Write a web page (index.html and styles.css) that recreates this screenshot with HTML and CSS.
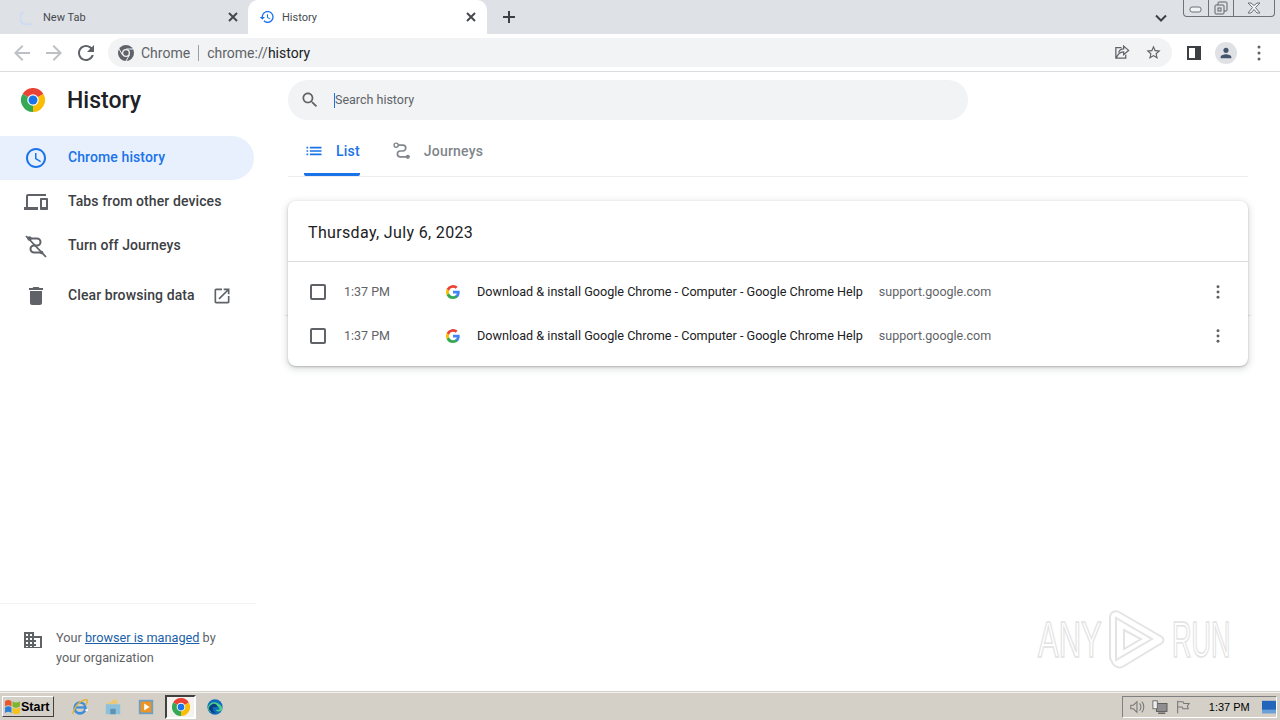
FILE: index.html
```html
<!DOCTYPE html>
<html lang="en">
<head>
    <meta charset="UTF-8">
    <title>History</title>
    <link rel="stylesheet" href="styles.css">
</head>
<body>
    <div class="tabstrip">
        <div class="tab">
            <svg class="tab-icon" viewBox="0 0 16 16"><path d="M3 3A7 7 0 0 0 11 14.500" fill="none" stroke="#cbdaf5" stroke-width="1.800"/></svg>
            <span class="tab-title">New Tab</span>
            <svg class="tab-close" viewBox="0 0 12 12"><path d="M2 2l8 8M10 2l-8 8"/></svg>
        </div>
        <div class="tab tab-active">
            <svg class="tab-icon" viewBox="0 0 24 24"><path fill="#1a73e8" d="M13 3c-4.970 0-9 4.030-9 9H1l3.890 3.890.07.14L9 12H6c0-3.870 3.130-7 7-7s7 3.130 7 7-3.130 7-7 7c-1.930 0-3.680-.79-4.940-2.060l-1.420 1.420C8.270 19.990 10.510 21 13 21c4.970 0 9-4.030 9-9s-4.030-9-9-9zm-1 5v5l4.280 2.540.72-1.210-3.500-2.080V8H12z"/></svg>
            <span class="tab-title">History</span>
            <svg class="tab-close" viewBox="0 0 12 12"><path d="M2 2l8 8M10 2l-8 8"/></svg>
        </div>
        <svg class="new-tab" viewBox="0 0 14 14"><path d="M7 1v12M1 7h12"/></svg>
        <div class="strip-space"></div>
        <svg class="tab-search" viewBox="0 0 12 8"><path d="M1 1.500l5 5 5-5"/></svg>
        <div class="window-btns">
            <div class="window-btn btn-min"><svg viewBox="0 0 14 8"><rect x="1" y="1" width="11" height="5" rx="2"/></svg></div>
            <div class="window-btn btn-max"><svg viewBox="0 0 14 14"><rect x="4" y="1" width="9" height="9" rx="1"/><rect x="1" y="4" width="9" height="9" rx="1" fill="#dee1e6"/><rect x="4" y="7" width="3" height="3"/></svg></div>
            <div class="window-btn btn-close"><svg viewBox="0 0 16 12"><path d="M2 1l4.500 4.500L2 11h3l3-3.500 3 3.500h3L9.500 5.500 14 1h-3L8 3.500 5 1z"/></svg></div>
        </div>
    </div>

    <div class="toolbar">
        <svg class="tool-icon dim" viewBox="0 0 24 24"><path d="M20 11H7.830l5.590-5.590L12 4l-8 8 8 8 1.410-1.410L7.830 13H20v-2z"/></svg>
        <svg class="tool-icon dim" viewBox="0 0 24 24"><path d="M4 11h12.170l-5.590-5.590L12 4l8 8-8 8-1.410-1.410L16.170 13H4v-2z"/></svg>
        <svg class="tool-icon" viewBox="0 0 24 24"><path d="M17.650 6.350C16.200 4.900 14.210 4 12 4c-4.420 0-7.990 3.580-7.990 8s3.570 8 7.990 8c3.730 0 6.840-2.550 7.730-6h-2.080c-.82 2.330-3.040 4-5.650 4-3.310 0-6-2.690-6-6s2.690-6 6-6c1.660 0 3.140.69 4.220 1.780L13 11h7V4l-2.350 2.350z"/></svg>
        <div class="omnibox">
            <svg class="site-icon" viewBox="0 0 48 48">
                <circle cx="24" cy="24" r="24" fill="#5f6368"/>
                <path d="M24 12h20.800M13.600 30L3.200 12M34.400 30L24 48" stroke="#f1f3f4" stroke-width="3"/>
                <circle cx="24" cy="24" r="12" fill="#f1f3f4"/>
                <circle cx="24" cy="24" r="8" fill="#5f6368"/>
            </svg>
            <span class="site-name">Chrome</span>
            <span class="site-sep"></span>
            <span class="url">chrome://<b>history</b></span>
            <span class="omni-space"></span>
            <svg class="omni-icon" viewBox="0 0 24 24"><path fill="none" stroke="#5f6368" stroke-width="1.800" d="M12 5H4v15h14v-5M4 20l4-6c2-2 4-3 7-3v4l7-6-7-6v4c-4 0-6 2-7 5"/></svg>
            <svg class="omni-icon star" viewBox="0 0 24 24"><path fill="#5f6368" d="M22 9.240l-7.190-.62L12 2 9.190 8.630 2 9.240l5.460 4.730L5.820 21 12 17.270 18.180 21l-1.630-7.030L22 9.240zM12 15.400l-3.760 2.270 1-4.280-3.320-2.880 4.380-.38L12 6.100l1.710 4.040 4.380.38-3.320 2.880 1 4.280L12 15.400z"/></svg>
        </div>
        <svg class="panel-icon" viewBox="0 0 14 14"><path fill="#3c4043" fill-rule="evenodd" d="M0 0h14v14H0zM2 2v10h6V2z"/></svg>
        <div class="avatar">
            <svg viewBox="0 0 24 24"><path fill="#44546f" d="M12 12c2.210 0 4-1.790 4-4s-1.790-4-4-4-4 1.790-4 4 1.790 4 4 4zm0 2c-2.670 0-8 1.340-8 4v2h16v-2c0-2.660-5.330-4-8-4z"/></svg>
        </div>
        <svg class="menu-icon" viewBox="0 0 4 16"><circle cx="2" cy="2" r="1.500"/><circle cx="2" cy="8" r="1.500"/><circle cx="2" cy="14" r="1.500"/></svg>
    </div>

    <div class="page">
        <div class="sidebar">
            <div class="brand">
                <svg class="logo" viewBox="0 0 48 48">
                    <path fill="#ea4335" d="M24 24L3.200 12A24 24 0 0 1 44.800 12z"/>
                    <path fill="#fbbc04" d="M24 24L44.800 12A24 24 0 0 1 24 48z"/>
                    <path fill="#34a853" d="M24 24L24 48A24 24 0 0 1 3.200 12z"/>
                    <circle cx="24" cy="24" r="11.500" fill="#fff"/>
                    <circle cx="24" cy="24" r="9" fill="#1a73e8"/>
                </svg>
                <h1>History</h1>
            </div>
            <div class="nav">
                <div class="nav-item selected">
                    <svg class="nav-icon" viewBox="0 0 24 24"><path d="M11.990 2C6.470 2 2 6.480 2 12s4.470 10 9.990 10C17.520 22 22 17.520 22 12S17.520 2 11.990 2zM12 20c-4.420 0-8-3.580-8-8s3.580-8 8-8 8 3.580 8 8-3.580 8-8 8zm.5-13H11v6l5.250 3.150.75-1.230-4.500-2.670z"/></svg>
                    <span>Chrome history</span>
                </div>
                <div class="nav-item">
                    <svg class="nav-icon" viewBox="0 0 24 24"><path d="M4 6h18V4H4c-1.100 0-2 .9-2 2v11H0v3h14v-3H4V6zm19 2h-6c-.55 0-1 .45-1 1v10c0 .55.45 1 1 1h6c.55 0 1-.45 1-1V9c0-.55-.45-1-1-1zm-1 9h-4v-7h4v7z"/></svg>
                    <span>Tabs from other devices</span>
                </div>
                <div class="nav-item">
                    <svg class="nav-icon" viewBox="0 0 24 24"><path fill="none" stroke="#5f6368" stroke-width="2" d="M7 4.500h6a3.500 3.500 0 0 1 0 7h-3a3.500 3.500 0 0 0 0 7h6"/><path fill="none" stroke="#5f6368" stroke-width="1.800" d="M2 2l20 21"/><circle cx="5.500" cy="4.500" r="2.200"/><circle cx="17.500" cy="18.500" r="1.800"/></svg>
                    <span>Turn off Journeys</span>
                </div>
                <div class="nav-item nav-clear">
                    <svg class="nav-icon" viewBox="0 0 24 24"><path d="M6 19c0 1.100.9 2 2 2h8c1.100 0 2-.9 2-2V7H6v12zM19 4h-3.500l-1-1h-5l-1 1H5v2h14V4z"/></svg>
                    <span>Clear browsing data</span>
                    <svg class="open-icon" viewBox="0 0 24 24"><path d="M19 19H5V5h7V3H5c-1.110 0-2 .9-2 2v14c0 1.100.89 2 2 2h14c1.100 0 2-.9 2-2v-7h-2v7zM14 3v2h3.590l-9.830 9.830 1.410 1.410L19 6.410V10h2V3h-7z"/></svg>
                </div>
            </div>
            <div class="managed">
                <svg class="managed-icon" viewBox="0 0 20 18"><path fill-rule="evenodd" d="M1 1h10v4h8v12H1zM3 3v2h2V3zm4 0v2h2V3zM3 7v2h2V7zm4 0v2h2V7zM3 11v2h2v-2zm4 0v2h2v-2zM3 15v1h2v-1zm4 0v1h2v-1zm4-8v2h2v2h-2v2h2v2h-2v1h6V7z"/></svg>
                <p>Your <a href="#">browser is managed</a> by<br>your organization</p>
            </div>
        </div>

        <div class="main">
            <div class="search">
                <svg class="search-icon" viewBox="0 0 24 24"><path d="M15.500 14h-.79l-.28-.27C15.410 12.590 16 11.110 16 9.500 16 5.910 13.090 3 9.500 3S3 5.910 3 9.500 5.910 16 9.500 16c1.610 0 3.090-.59 4.230-1.570l.27.28v.79l5 4.990L20.490 19l-4.990-5zm-6 0C7.010 14 5 11.990 5 9.500S7.010 5 9.500 5 14 7.010 14 9.500 11.990 14 9.500 14z"/></svg>
                <span class="caret"></span>
                <span class="search-text">Search history</span>
            </div>
            <div class="tabs">
                <div class="view-tab view-active">
                    <svg viewBox="0 0 24 24"><path d="M3 13h2v-2H3v2zm0 4h2v-2H3v2zm0-8h2V7H3v2zm4 4h14v-2H7v2zm0 4h14v-2H7v2zM7 7v2h14V7H7z"/></svg>
                    <span>List</span>
                </div>
                <div class="view-tab">
                    <svg viewBox="0 0 24 24"><path fill="none" stroke="#80868b" stroke-width="2" d="M7 5h6a3.500 3.500 0 0 1 0 7h-3a3.500 3.500 0 0 0 0 7h7"/><circle cx="5" cy="5" r="2.500" fill="none" stroke="#80868b" stroke-width="1.600"/><circle cx="19" cy="19" r="2.500"/></svg>
                    <span>Journeys</span>
                </div>
            </div>
            <div class="card">
                <div class="card-date">Thursday, July 6, 2023</div>
                <div class="entries">
                    <div class="entry">
                        <span class="checkbox"></span>
                        <span class="entry-time">1:37 PM</span>
                        <svg class="favicon" viewBox="0 0 18 18">
                            <path fill="#4285f4" d="M17.640 9.200c0-.64-.06-1.250-.16-1.840H9v3.480h4.840a4.140 4.140 0 0 1-1.800 2.720v2.260h2.920c1.700-1.570 2.680-3.880 2.680-6.620z"/>
                            <path fill="#34a853" d="M9 18c2.430 0 4.470-.8 5.960-2.180l-2.920-2.260c-.8.54-1.840.86-3.040.86-2.340 0-4.320-1.580-5.040-3.700H.96v2.330A9 9 0 0 0 9 18z"/>
                            <path fill="#fbbc05" d="M3.960 10.720A5.410 5.410 0 0 1 3.680 9c0-.6.1-1.180.28-1.720V4.950H.96A9 9 0 0 0 0 9c0 1.450.35 2.830.96 4.050l3-2.330z"/>
                            <path fill="#ea4335" d="M9 3.580c1.320 0 2.500.45 3.440 1.350l2.580-2.580A9 9 0 0 0 .96 4.950l3 2.330C4.680 5.160 6.660 3.580 9 3.580z"/>
                        </svg>
                        <span class="entry-title">Download &amp; install Google Chrome - Computer - Google Chrome Help</span>
                        <span class="entry-domain">support.google.com</span>
                        <svg class="entry-menu" viewBox="0 0 4 16"><circle cx="2" cy="2" r="1.700"/><circle cx="2" cy="8" r="1.700"/><circle cx="2" cy="14" r="1.700"/></svg>
                    </div>
                    <div class="entry">
                        <span class="checkbox"></span>
                        <span class="entry-time">1:37 PM</span>
                        <svg class="favicon" viewBox="0 0 18 18">
                            <path fill="#4285f4" d="M17.640 9.200c0-.64-.06-1.250-.16-1.840H9v3.480h4.840a4.140 4.140 0 0 1-1.800 2.720v2.260h2.920c1.700-1.570 2.680-3.880 2.680-6.620z"/>
                            <path fill="#34a853" d="M9 18c2.430 0 4.470-.8 5.960-2.180l-2.920-2.260c-.8.54-1.840.86-3.040.86-2.340 0-4.320-1.580-5.040-3.700H.96v2.330A9 9 0 0 0 9 18z"/>
                            <path fill="#fbbc05" d="M3.960 10.720A5.410 5.410 0 0 1 3.680 9c0-.6.1-1.180.28-1.720V4.950H.96A9 9 0 0 0 0 9c0 1.450.35 2.830.96 4.050l3-2.330z"/>
                            <path fill="#ea4335" d="M9 3.580c1.320 0 2.500.45 3.440 1.350l2.580-2.580A9 9 0 0 0 .96 4.950l3 2.330C4.680 5.160 6.660 3.580 9 3.580z"/>
                        </svg>
                        <span class="entry-title">Download &amp; install Google Chrome - Computer - Google Chrome Help</span>
                        <span class="entry-domain">support.google.com</span>
                        <svg class="entry-menu" viewBox="0 0 4 16"><circle cx="2" cy="2" r="1.700"/><circle cx="2" cy="8" r="1.700"/><circle cx="2" cy="14" r="1.700"/></svg>
                    </div>
                </div>
            </div>
        </div>
    </div>

    <div class="watermark">
        <span class="wm-text">ANY</span>
        <svg class="wm-logo" viewBox="0 0 60 64">
            <path d="M4 9a6 6 0 0 1 9-5l43 25a4 4 0 0 1 0 6L18 58a8 8 0 0 1-11-2L4 50z"/>
            <path d="M10 10v42l36-21z"/>
            <path d="M18 22v19l17-10z"/>
        </svg>
        <span class="wm-text wm-run">RUN</span>
    </div>

    <div class="taskbar">
        <div class="start">
            <svg viewBox="0 0 16 16"><path fill="#e8562a" d="M1 3c2-1.500 4-1.500 6 0v5C5 6.500 3 6.500 1 8z"/><path fill="#7db52f" d="M8 3c2 1.500 4 1.500 7 0v5c-3 1.500-5 1.500-7 0z"/><path fill="#2b7fd6" d="M1 9c2-1.500 4-1.500 6 0v5c-2-1.500-4-1.500-6 0z"/><path fill="#f5c21a" d="M8 9c2 1.500 4 1.500 7 0v5c-3 1.500-5 1.500-7 0z"/></svg>
            <span>Start</span>
        </div>
        <div class="quick">
            <div class="quick-item">
                <svg viewBox="0 0 20 20"><circle cx="10" cy="11" r="6" fill="none" stroke="#3f8fd8" stroke-width="3"/><path d="M5 10.500h10" stroke="#3f8fd8" stroke-width="2.500"/><path d="M16 13.500h3" stroke="#fff" stroke-width="2"/><path d="M2 18C4 8 12 1 18 2c1 2-1 4-2 6" fill="none" stroke="#e2b33a" stroke-width="1.500"/></svg>
            </div>
            <div class="quick-item">
                <svg viewBox="0 0 20 20"><path fill="#e9c877" d="M3 5h5l1-3h6v5H3z"/><path fill="#8cc1dc" d="M2 7h16v11H2z"/><path fill="#5e93b3" d="M7 12h6v6H7z"/></svg>
            </div>
            <div class="quick-item">
                <svg viewBox="0 0 20 20"><rect x="2" y="2" width="16" height="16" fill="#6d9ec4"/><rect x="4" y="4" width="12" height="12" fill="#ee9424"/><path fill="#fff" d="M8 6l6 4-6 4z"/></svg>
            </div>
            <div class="quick-item quick-active">
                <svg viewBox="0 0 48 48">
                    <path fill="#ea4335" d="M24 24L3.200 12A24 24 0 0 1 44.800 12z"/>
                    <path fill="#fbbc04" d="M24 24L44.800 12A24 24 0 0 1 24 48z"/>
                    <path fill="#34a853" d="M24 24L24 48A24 24 0 0 1 3.200 12z"/>
                    <circle cx="24" cy="24" r="11.500" fill="#fff"/>
                    <circle cx="24" cy="24" r="9" fill="#1a73e8"/>
                </svg>
            </div>
            <div class="quick-item">
                <svg viewBox="0 0 20 20"><circle cx="10" cy="10" r="8.500" fill="#0f6cbd"/><path fill="#4fd08a" d="M2 11c1-5 5-7 9-6 4 1 7 4 7 7 0 2-2 3-4 3-1 0-3-1-3-2h4c0-3-3-5-6-4-3 1-4 4-3 7-2-1-4-3-4-5z"/><path fill="#0a3f82" d="M5 8c3-3 7-2 8 2H8c-1 2 0 5 3 7-4 0-7-2-8-5 0-1 1-3 2-4z"/></svg>
            </div>
        </div>
        <div class="task-space"></div>
        <div class="tray">
            <svg class="tray-icon" viewBox="0 0 18 16"><path fill="none" stroke="#777" stroke-width="1.200" d="M2 6h3l4-4v12l-4-4H2zM12 4c2 2 2 6 0 8M14.500 2c3 3 3 9 0 12"/></svg>
            <svg class="tray-icon" viewBox="0 0 18 16"><rect x="5" y="4" width="12" height="9" fill="#8f8f8f" stroke="#555"/><rect x="1" y="1" width="5" height="9" fill="#eee" stroke="#666"/><path d="M7 15h8" stroke="#555" stroke-width="1.500"/></svg>
            <svg class="tray-icon" viewBox="0 0 18 16"><path fill="none" stroke="#777" stroke-width="1.200" d="M3 1v14M3 2h6l1 2h6l-2 3 1 3H9L8 8H3"/></svg>
            <span class="clock">1:37 PM</span>
            <svg class="show-desktop" viewBox="0 0 16 14"><rect width="16" height="14" fill="#2266bb"/><rect y="10" width="16" height="4" fill="#6aa2d8"/></svg>
        </div>
    </div>
</body>
</html>
```

FILE: styles.css
```css
* {
    margin: 0;
    padding: 0;
    box-sizing: border-box;
}

body {
    font-family: Roboto, 'Liberation Sans', sans-serif;
    background: white;
    width: 1280px;
    height: 720px;
    overflow: hidden;
    display: flex;
    flex-direction: column;
    position: relative;
}

/* tab strip */

.tabstrip {
    height: 34px;
    background: #dee1e6;
    display: flex;
    align-items: center;
    flex: none;
}

.tab {
    width: 248px;
    height: 34px;
    display: flex;
    align-items: center;
    padding: 0 9px 0 20px;
}

.tab-active {
    width: 239px;
    background: white;
    border-radius: 10px 10px 0 0;
    padding-left: 11px;
    padding-right: 10px;
}

.tab-icon {
    width: 16px;
    height: 16px;
    flex: none;
}

.tab-title {
    font-size: 11px;
    color: #45494e;
    margin-left: 7px;
    flex: 1;
}

.tab-close {
    width: 12px;
    height: 12px;
    fill: none;
    stroke: #45494e;
    stroke-width: 2;
}

.new-tab {
    width: 14px;
    height: 14px;
    margin-left: 15px;
    fill: none;
    stroke: #3c4043;
    stroke-width: 2;
}

.strip-space {
    flex: 1;
}

.tab-search {
    width: 12px;
    height: 8px;
    fill: none;
    stroke: #3c4043;
    stroke-width: 2;
    margin-right: 16px;
    margin-top: 1px;
}

.window-btns {
    width: 92px;
    height: 17px;
    margin-right: 5px;
    align-self: flex-start;
    display: flex;
    border: 1px solid #6e7378;
    border-top: none;
    border-radius: 0 0 4px 4px;
}

.window-btn {
    display: flex;
    align-items: center;
    justify-content: center;
    border-right: 1px solid #6e7378;
}

.btn-min { width: 25px; }
.btn-max { width: 25px; }
.btn-close { flex: 1; border-right: none; }

.btn-min svg {
    width: 14px;
    height: 8px;
    margin-top: 4px;
    fill: #f1f3f4;
    stroke: #6e7378;
}

.btn-max svg {
    width: 14px;
    height: 14px;
    fill: none;
    stroke: #5f6368;
}

.btn-close svg {
    width: 16px;
    height: 12px;
    fill: #f1f3f4;
    stroke: #6e7378;
}

/* toolbar */

.toolbar {
    height: 38px;
    flex: none;
    background: white;
    border-bottom: 1px solid #dadce0;
    display: flex;
    align-items: center;
    padding: 0 0 0 10px;
}

.tool-icon {
    width: 24px;
    height: 24px;
    margin-right: 8px;
    fill: #5f6368;
}

.tool-icon.dim {
    fill: #bdc1c6;
}

.omnibox {
    width: 1064px;
    height: 29px;
    background: #f1f3f4;
    border-radius: 15px;
    display: flex;
    align-items: center;
    padding: 0 10px 0 10px;
    margin-left: 2px;
}

.site-icon {
    width: 16px;
    height: 16px;
    flex: none;
}

.site-name {
    font-size: 14px;
    color: #5f6368;
    margin-left: 7px;
}

.site-sep {
    width: 1px;
    height: 16px;
    background: #9aa0a6;
    margin: 0 8px;
}

.url {
    font-size: 14px;
    color: #5f6368;
}

.url b {
    font-weight: normal;
    color: #202124;
}

.omni-space {
    flex: 1;
}

.omni-icon {
    width: 17px;
    height: 17px;
}

.omni-icon.star {
    margin-left: 15px;
}

.panel-icon {
    width: 14px;
    height: 14px;
    margin-left: 15px;
}

.avatar {
    width: 22px;
    height: 22px;
    border-radius: 50%;
    background: #dfe1e5;
    margin-left: 14px;
    padding: 3px;
}

.avatar svg {
    display: block;
    width: 16px;
    height: 16px;
}

.menu-icon {
    width: 4px;
    height: 16px;
    margin-left: 20px;
    fill: #5f6368;
}

/* page */

.page {
    flex: 1;
    display: flex;
    min-height: 0;
}

.sidebar {
    width: 256px;
    flex: none;
    display: flex;
    flex-direction: column;
}

.brand {
    height: 56px;
    margin-bottom: 8px;
    display: flex;
    align-items: center;
    padding-left: 21px;
}

.logo {
    width: 24px;
    height: 24px;
}

.brand h1 {
    font-size: 23px;
    font-weight: 500;
    color: #202124;
    margin-left: 22px;
}

.nav {
    flex: 1;
}

.nav-item {
    width: 254px;
    height: 44px;
    display: flex;
    align-items: center;
    padding-left: 24px;
    font-size: 14px;
    font-weight: 500;
    letter-spacing: 0.1px;
    color: #3c4043;
}

.nav-item span {
    margin-top: -2px;
}

.nav-item.selected {
    background: #e8f0fe;
    border-radius: 0 22px 22px 0;
    color: #1a73e8;
}

.nav-icon {
    width: 24px;
    height: 24px;
    margin-right: 20px;
    fill: #5f6368;
}

.selected .nav-icon {
    fill: #1a73e8;
}

.nav-clear {
    margin-top: 6px;
}

.open-icon {
    width: 20px;
    height: 20px;
    margin-left: 17px;
    fill: #5f6368;
}

.managed {
    height: 89px;
    border-top: 1px solid #f1f3f4;
    display: flex;
    padding: 24px 0 0 25px;
}

.managed-icon {
    width: 20px;
    height: 18px;
    margin-top: 3px;
    margin-right: 13px;
    margin-left: -2px;
    fill: #5f6368;
}

.managed p {
    font-size: 12.700px;
    line-height: 20px;
    color: #5f6368;
}

.managed a {
    color: #1a5fa8;
}

.main {
    width: 960px;
    margin-left: 32px;
}

.search {
    width: 680px;
    height: 40px;
    margin-top: 8px;
    background: #f1f3f4;
    border-radius: 20px;
    display: flex;
    align-items: center;
    padding-left: 12px;
}

.search-icon {
    width: 20px;
    height: 20px;
    fill: #5f6368;
}

.caret {
    width: 1px;
    height: 15px;
    background: #1a73e8;
    margin-left: 14px;
}

.search-text {
    font-size: 12.500px;
    color: #5f6368;
    margin-top: -1px;
}

.tabs {
    height: 57px;
    display: flex;
    padding-left: 16px;
    border-bottom: 1px solid #eceef0;
}

.view-tab {
    height: 56px;
    display: flex;
    align-items: center;
    padding-top: 6px;
    margin-right: 32px;
    font-size: 14px;
    font-weight: 500;
    letter-spacing: 0.2px;
    color: #80868b;
}

.view-tab svg {
    width: 20px;
    height: 20px;
    margin-right: 12px;
    fill: #80868b;
}

.view-active {
    color: #1a73e8;
    border-bottom: 3px solid #1a73e8;
    border-radius: 0 0 2px 2px;
    padding-top: 9px;
}

.view-active svg {
    fill: #1a73e8;
}

.card {
    position: relative;
    margin-top: 24px;
    border-radius: 8px;
    background: white;
    box-shadow: 0 1px 2px rgba(60, 64, 67, 0.3), 0 2px 6px 2px rgba(60, 64, 67, 0.15);
}

.card::before {
    content: '';
    position: absolute;
    left: -3px;
    right: -3px;
    top: 114px;
    height: 1px;
    background: #e8e8e8;
    z-index: -1;
}

.card-date {
    height: 61px;
    border-bottom: 1px solid #dadce0;
    font-size: 16px;
    line-height: 63px;
    padding-left: 20px;
    color: #202124;
    letter-spacing: 0.35px;
}

.entries {
    padding: 8px 0 8px;
}

.entry {
    height: 44px;
    display: flex;
    align-items: center;
    padding-left: 22px;
}

.checkbox {
    width: 16px;
    height: 16px;
    border: 2px solid #5f6368;
    border-radius: 2px;
    flex: none;
}

.entry-time {
    width: 102px;
    margin-left: 18px;
    margin-top: -2px;
    font-size: 12.500px;
    color: #5f6368;
}

.favicon {
    width: 14px;
    height: 14px;
    flex: none;
}

.entry-title {
    margin-left: 17px;
    margin-top: -2px;
    font-size: 12.640px;
    color: #202124;
}

.entry-domain {
    margin-left: 16px;
    margin-top: -2px;
    font-size: 12.500px;
    color: #5f6368;
    flex: 1;
}

.entry-menu {
    width: 4px;
    height: 14px;
    margin-right: 28px;
    fill: #5f6368;
}

/* watermark sits over the page */

.watermark {
    position: absolute;
    left: 1038px;
    top: 608px;
    display: flex;
    align-items: center;
}

.wm-text {
    display: inline-block;
    width: 68px;
    font-size: 50px;
    line-height: 60px;
    color: white;
    -webkit-text-stroke: 1.500px #e2e2e2;
    text-shadow: 0 0 2px #ececec;
    transform: scaleX(0.62);
    transform-origin: left center;
    white-space: nowrap;
    font-family: 'Liberation Sans', sans-serif;
}

.wm-run {
    transform: scaleX(0.54);
}

.wm-logo {
    width: 60px;
    height: 64px;
    fill: none;
    stroke: #e4e4e4;
    stroke-width: 2;
    margin-right: 6px;
}

/* windows taskbar */

.taskbar {
    height: 28px;
    flex: none;
    background: #d4d0c8;
    border-top: 1px solid #f4f2ee;
    box-shadow: 0 -1px 0 #d4d0c8;
    display: flex;
    align-items: center;
    padding: 0 3px 0 2px;
    font-family: 'Liberation Sans', sans-serif;
}

.start {
    width: 52px;
    height: 21px;
    display: flex;
    align-items: center;
    padding-left: 1px;
    border: 1px solid #fff;
    border-right-color: #404040;
    border-bottom-color: #404040;
    font-size: 12.500px;
    font-weight: bold;
    color: #000;
}

.start svg {
    width: 17px;
    height: 17px;
}

.quick {
    display: flex;
    align-items: center;
    margin-left: 9px;
}

.quick-item {
    width: 33px;
    height: 24px;
    display: flex;
    align-items: center;
    justify-content: center;
}

.quick-item svg {
    width: 18px;
    height: 18px;
}

.quick-active {
    width: 31px;
    margin: 0 2px 0 3px;
    background: #f4f2ee;
    border: 2px solid;
    border-color: #404040 #fff #fff #404040;
}

.task-space {
    flex: 1;
}

.tray {
    width: 155px;
    height: 22px;
    display: flex;
    align-items: center;
    padding-left: 6px;
    gap: 7px;
    border: 1px solid;
    border-color: #808080 #fff #fff #808080;
}

.tray-icon {
    width: 18px;
    height: 16px;
}

.clock {
    font-size: 11px;
    width: 58px;
    margin-left: 6px;
    text-align: center;
    color: #000;
}

.show-desktop {
    width: 16px;
    height: 14px;
}
```
